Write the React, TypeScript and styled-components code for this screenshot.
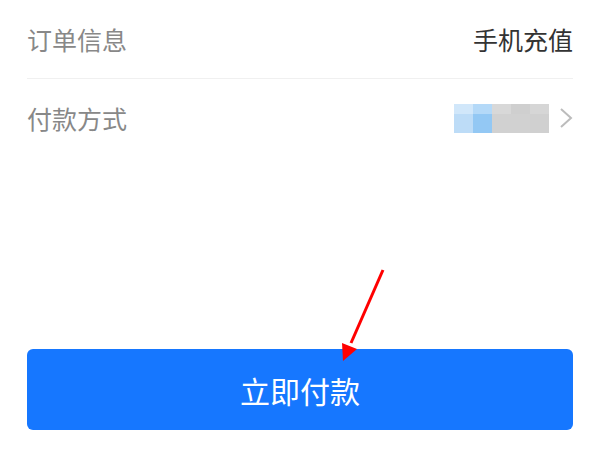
import React from 'react';
import styled, {createGlobalStyle} from 'styled-components';

const GlobalStyle = createGlobalStyle`
  html, body {
    margin: 0;
    padding: 0;
    background: #ffffff;
    font-family: "Noto Sans CJK SC", "Noto Sans", sans-serif;
  }
`;

const Page = styled.div`
  position: relative;
  width: 600px;
  height: 450px;
  padding: 0 27px;
  box-sizing: border-box;
  overflow: hidden;
`;

const Row = styled.div<{ $divider?: boolean }>`
  display: flex;
  align-items: center;
  justify-content: space-between;
  height: 78px;
  border-bottom: ${p => (p.$divider ? '1px solid #f0f0f0' : 'none')};
`;

const Label = styled.span`
  font-size: 25px;
  color: #888888;
  letter-spacing: 0;
`;

const Value = styled.span`
  font-size: 25px;
  color: #333333;
`;

const PayMethod = styled.div`
  display: flex;
  align-items: center;
  gap: 10px;
`;

const Mosaic = styled.div`
  display: grid;
  grid-template-columns: repeat(5, 19px);
  grid-template-rows: 10px 19px;
`;

const Cell = styled.div<{ $c: string }>`
  background: ${p => p.$c};
`;

const PayButton = styled.button`
  display: flex;
  align-items: center;
  justify-content: center;
  width: 100%;
  height: 81px;
  margin-top: 192px;
  border: none;
  border-radius: 6px;
  background: #1677ff;
  color: #ffffff;
  font-family: inherit;
  font-size: 30px;
  letter-spacing: 0;
  cursor: pointer;
`;

const Arrow = styled.svg`
  position: absolute;
  left: 0;
  top: 0;
  pointer-events: none;
`;

const mosaicColors = [
  '#d1e7fa', '#b4d9f8', '#d8d8d8', '#cfcfcf', '#d6d6d6',
  '#bddcf7', '#93c8f4', '#d1d1d1', '#d1d1d1', '#d0d0d0',
];

const Chevron = () => (
  <svg width="14" height="22" viewBox="0 0 14 22">
    <path d="M2 2 L12 11 L2 20" fill="none" stroke="#bcbcbc" strokeWidth="2"/>
  </svg>
);

const App = () => {
  return (
    <>
      <GlobalStyle/>
      <Page>
        <Row $divider>
          <Label>订单信息</Label>
          <Value>手机充值</Value>
        </Row>
        <Row>
          <Label>付款方式</Label>
          <PayMethod>
            <Mosaic>
              {mosaicColors.map((c, i) => <Cell key={i} $c={c}/>)}
            </Mosaic>
            <Chevron/>
          </PayMethod>
        </Row>
        <PayButton>立即付款</PayButton>
        <Arrow width="600" height="450" viewBox="0 0 600 450">
          <line x1="383" y1="270" x2="351" y2="343" stroke="#ff0000" strokeWidth="3"/>
          <polygon points="343,361 342,343 357,349" fill="#ff0000"/>
        </Arrow>
      </Page>
    </>
  );
};

export default App;
